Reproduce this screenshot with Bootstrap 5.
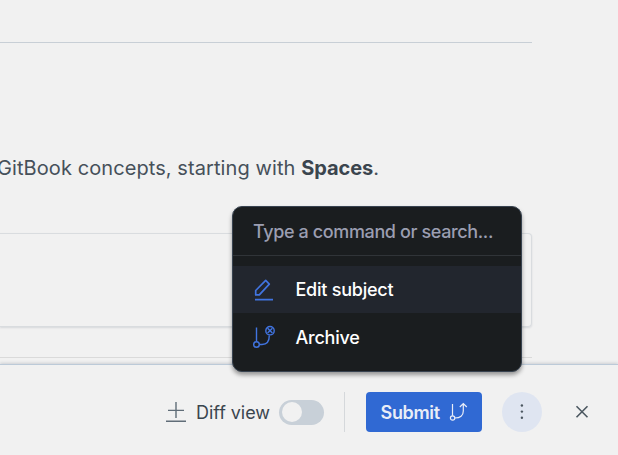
<!DOCTYPE html>
<html lang="en">
<head>
<meta charset="utf-8">
<meta name="viewport" content="width=device-width, initial-scale=1">
<title>Change request</title>
<link href="https://cdn.jsdelivr.net/npm/bootstrap@5.3.0/dist/css/bootstrap.min.css" rel="stylesheet">
<style>
body { font-family: Inter, "Liberation Sans", sans-serif; background: #f1f1f1; color: #3b454e; height: 455px; }
.doc { width: 532px; }
.doc-head { height: 43px; border-bottom: 1px solid #c8cfd6; }
.doc-text { font-size: 20px; line-height: 30px; margin: 110px 0 50px -3px; color: #46505a; letter-spacing: .085px; white-space: nowrap; }
.doc-text strong { font-weight: 700; color: #3b454e; letter-spacing: -.05px; }
.doc-card { height: 94px; background: transparent; border: 1px solid #d9dcdf; border-left: 0; border-radius: 0 4px 4px 0; box-shadow: 0 1px 2px rgba(60,70,90,.14); }
.doc-rule { height: 31px; border-bottom: 1px solid #dadada; }
.action-bar { height: 91px; background: #f1f1f1; border-top: 1px solid #bccad8; padding: 27px 20px 23px 165px; box-shadow: 0 -1px 3px rgba(60,70,90,.2); }
.diff-label { font-size: 18px; line-height: 24px; width: 74px; margin-left: 9px; padding-top: 2px; letter-spacing: -.05px; white-space: nowrap; }
.diff-switch { width: 45px; height: 25px; padding: 2px 3px; background: #c8d0d8; margin-left: 9px; }
.diff-knob { width: 20px; height: 20px; background: #f1f1f1; }
.bar-rule { width: 1px; height: 40px; background: #d5d8db; margin: 0 21px 0 20px; }
.btn-submit { --bs-btn-bg: #3069d3; --bs-btn-color: #eceff7; --bs-btn-border-width: 0; --bs-btn-padding-x: 14px; --bs-btn-padding-y: 0; --bs-btn-border-radius: 4px; width: 116px; height: 40px; font-size: 18px; font-weight: 600; letter-spacing: -.35px; background: #3069d3; color: #e9edf7; }
.submit-text { padding-left: .6px; }
.btn-dots { width: 40px; height: 40px; margin-left: 20px; background: #dfe5f1; }
.btn-x { width: 40px; height: 40px; margin-left: 20px; }
.palette { left: 232px; top: 206px; width: 290px; height: 166px; background: #1a1d1f; border: 1px solid #384350; border-radius: 10px; box-shadow: 0 3px 4px rgba(0,0,0,.38); }
.palette-search { height: 49px; padding: 0 20px; border-bottom: 1px solid #303438; color: #9b9eb1; font-size: 18px; font-weight: 500; letter-spacing: -.38px; margin-bottom: 10px; white-space: nowrap; }
.palette-item { height: 48px; padding: 0 0 0 18px; color: #fff; font-size: 18px; font-weight: 500; letter-spacing: -.24px; }
.palette-item.current { background: #22262e; height: 47px; }
.palette-item svg { margin-right: 20.5px; }
</style>
</head>
<body class="d-flex flex-column overflow-hidden position-relative">
<main class="flex-grow-1">
  <div class="doc">
    <div class="doc-head"></div>
    <p class="doc-text">GitBook concepts, starting with <strong>Spaces</strong>.</p>
    <div class="doc-card"></div>
    <div class="doc-rule"></div>
  </div>
</main>

<footer class="action-bar d-flex align-items-center flex-shrink-0">
  <svg class="flex-shrink-0" width="22" height="24" fill="none" stroke="#606d78" stroke-width="1.4"><path d="M11 2v16M3 10.400h16M1 21.300h20"/></svg>
  <span class="diff-label">Diff view</span>
  <span class="diff-switch rounded-pill d-flex align-items-center flex-shrink-0"><span class="diff-knob rounded-circle"></span></span>
  <span class="bar-rule flex-shrink-0"></span>
  <button class="btn btn-submit d-flex align-items-center justify-content-between flex-shrink-0" type="button">
    <span class="submit-text">Submit</span>
    <svg width="20" height="20" fill="none" stroke="currentColor" stroke-width="1.2"><path d="M4.500 2v11.700M6.800 16c5.500 0 8.500-2.300 8.500-7V1.900M11.800 5l3.500-3.500L18.800 5"/><circle cx="4.600" cy="16" r="2.200"/></svg>
  </button>
  <button class="btn btn-dots border-0 p-0 rounded-circle d-flex align-items-center justify-content-center flex-shrink-0" type="button" aria-label="More">
    <svg width="20" height="20" fill="#4c5761"><circle cx="9.900" cy="3.500" r="1.200"/><circle cx="9.900" cy="9.600" r="1.200"/><circle cx="9.900" cy="15.700" r="1.200"/></svg>
  </button>
  <button class="btn btn-x border-0 p-0 d-flex align-items-center justify-content-center flex-shrink-0" type="button" aria-label="Close">
    <svg width="20" height="20" fill="none" stroke="#4c5861" stroke-width="1.600"><path d="M4.500 4.300l11 11M15.500 4.300l-11 11"/></svg>
  </button>
</footer>

<div class="palette position-absolute overflow-hidden">
  <div class="palette-search d-flex align-items-center"><span>Type a command or search...</span></div>
  <div class="palette-item current d-flex align-items-center">
    <svg width="24" height="24" fill="none" stroke="#4174e0" stroke-width="1.700" stroke-linejoin="round"><path d="M4.700 16.900v-4.400L14.700 2.400l3.600 3.700L8.300 16.900zM4 21.700h18"/></svg>
    <span>Edit subject</span>
  </div>
  <div class="palette-item d-flex align-items-center">
    <svg width="24" height="24" fill="none" stroke="#4174e0" stroke-width="1.400"><path d="M5.500 2.500v14M8.500 19.500h2.500c4.500 0 7.300-3 7.300-9"/><circle cx="5.500" cy="19.500" r="2.800"/><circle cx="19" cy="5.700" r="4.200"/><path d="M16.600 3.300l4.800 4.800M21.400 3.300l-4.800 4.800"/></svg>
    <span>Archive</span>
  </div>
</div>
<script src="https://cdn.jsdelivr.net/npm/bootstrap@5.3.0/dist/js/bootstrap.bundle.min.js"></script>
</body>
</html>
